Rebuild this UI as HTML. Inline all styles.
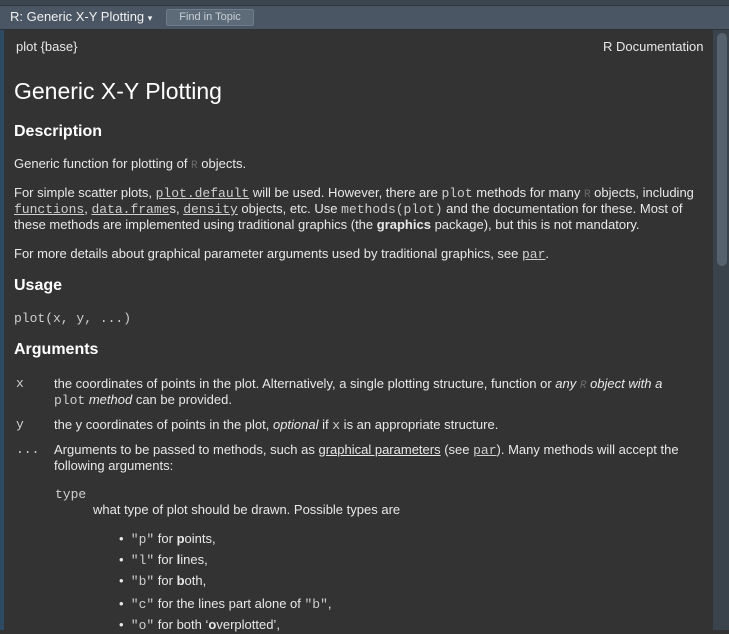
<!DOCTYPE html>
<html><head><meta charset="utf-8">
<style>
*{margin:0;padding:0;box-sizing:border-box}
body{width:729px;height:630px;overflow:hidden;background:#333333;font-family:"Liberation Sans",Arial,sans-serif;color:#e8e8e8;position:relative}
.t{position:absolute;white-space:nowrap;font-size:13px;line-height:16px}
code,.c{font-family:"Liberation Mono",monospace;font-size:13px;color:#cfcfcf}
.u{text-decoration:underline}
.r{color:#6a6a6a;font-family:"Liberation Mono",monospace;font-size:11px}
h2{position:absolute;font-size:16px;font-weight:bold;color:#fff;white-space:nowrap}
</style></head><body>
<div style="position:absolute;left:0;top:0;width:729px;height:5px;background:#3b4650"></div>
<div style="position:absolute;left:0;top:5px;width:729px;height:24px;background:#4a5663;border-top:1px solid #2c353e"></div>
<div class="t" style="left:10px;top:9px;color:#f0f0f0;font-size:13px">R: Generic X-Y Plotting <span style="font-size:9px">▾</span></div>
<div style="position:absolute;left:166px;top:9px;width:88px;height:17px;background:#5d6a77;border:1px solid #6e7b88;border-radius:2px;color:#c8d0d8;font-size:11px;line-height:15px;text-align:center">Find in Topic</div>
<div style="position:absolute;left:0;top:29px;width:729px;height:1px;background:#2a3036"></div>
<div style="position:absolute;left:0;top:30px;width:4px;height:600px;background:#2d4a64"></div>
<div style="position:absolute;left:713px;top:30px;width:16px;height:600px;background:#3a434c"></div>
<div style="position:absolute;left:717px;top:33px;width:10px;height:233px;background:#56626e;border-radius:5px"></div>

<div class="t" style="left:16px;top:39px">plot {base}</div>
<div class="t" style="left:603px;top:39px">R Documentation</div>
<div class="t" style="left:14px;top:77px;font-size:23px;line-height:28px;color:#fff">Generic X-Y Plotting</div>
<h2 style="left:14px;top:123px">Description</h2>
<div class="t" style="left:14px;top:156px">Generic function for plotting of <span class="r">R</span> objects.</div>
<div class="t" style="left:14px;top:185px">For simple scatter plots, <code class="u">plot.default</code> will be used. However, there are <code>plot</code> methods for many <span class="r">R</span> objects, including</div>
<div class="t" style="left:14px;top:201px"><code class="u">functions</code>, <code class="u">data.frame</code>s, <code class="u">density</code> objects, etc. Use <code>methods(plot)</code> and the documentation for these. Most of</div>
<div class="t" style="left:14px;top:217px">these methods are implemented using traditional graphics (the <b>graphics</b> package), but this is not mandatory.</div>
<div class="t" style="left:14px;top:246px">For more details about graphical parameter arguments used by traditional graphics, see <code class="u">par</code>.</div>
<h2 style="left:14px;top:277px">Usage</h2>
<div class="t c" style="left:14px;top:311px">plot(x, y, ...)</div>
<h2 style="left:14px;top:341px">Arguments</h2>
<div class="t c" style="left:16px;top:376px">x</div>
<div class="t" style="left:54px;top:376px">the coordinates of points in the plot. Alternatively, a single plotting structure, function or <i>any <span class="r">R</span> object with a</i></div>
<div class="t" style="left:54px;top:392px"><code>plot</code> <i>method</i> can be provided.</div>
<div class="t c" style="left:16px;top:417px">y</div>
<div class="t" style="left:54px;top:417px">the y coordinates of points in the plot, <i>optional</i> if <code>x</code> is an appropriate structure.</div>
<div class="t c" style="left:16px;top:442px">...</div>
<div class="t" style="left:54px;top:442px">Arguments to be passed to methods, such as <span class="u">graphical parameters</span> (see <code class="u">par</code>). Many methods will accept the</div>
<div class="t" style="left:54px;top:458px">following arguments:</div>
<div class="t c" style="left:55px;top:487px">type</div>
<div class="t" style="left:93px;top:502px">what type of plot should be drawn. Possible types are</div>
<div class="t" style="left:119px;top:531px">•&nbsp; <code>"p"</code> for <b>p</b>oints,</div>
<div class="t" style="left:119px;top:552px">•&nbsp; <code>"l"</code> for <b>l</b>ines,</div>
<div class="t" style="left:119px;top:573px">•&nbsp; <code>"b"</code> for <b>b</b>oth,</div>
<div class="t" style="left:119px;top:596px">•&nbsp; <code>"c"</code> for the lines part alone of <code>"b"</code>,</div>
<div class="t" style="left:119px;top:617px">•&nbsp; <code>"o"</code> for both ‘<b>o</b>verplotted’,</div>
</body></html>
